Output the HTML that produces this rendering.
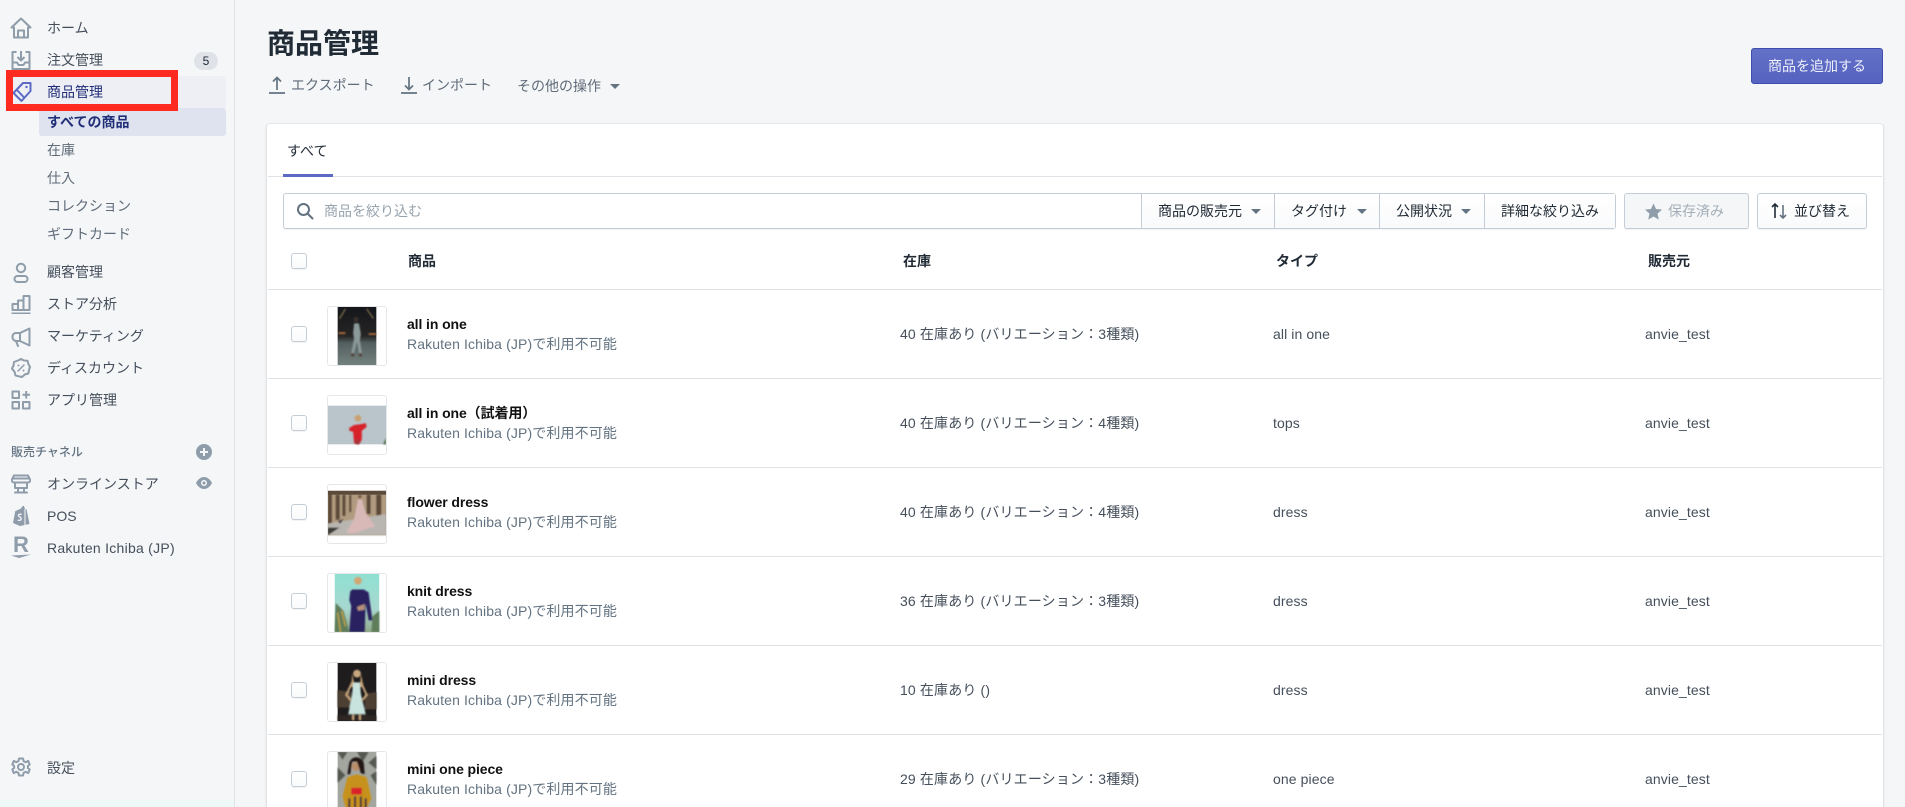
<!DOCTYPE html>
<html lang="ja">
<head>
<meta charset="utf-8">
<title>商品管理</title>
<style>
*{box-sizing:border-box}
html,body{margin:0;padding:0;width:1905px;height:807px;overflow:hidden;background:#f4f6f8}
body{position:relative;font-family:"Liberation Sans","Noto Sans CJK JP",sans-serif;font-size:14px;color:#454f5b}
.t{position:absolute;white-space:nowrap;line-height:20px;height:20px}
.a{position:absolute}
svg{position:absolute;display:block;overflow:hidden}
.ic{fill:none;stroke:#8f9caa;stroke-width:2;stroke-linejoin:round;stroke-linecap:round}
.cb{position:absolute;left:291px;width:16px;height:16px;border:1px solid #c4cdd5;border-radius:3px;background:linear-gradient(#fff,#f9fafb);box-shadow:0 1px 0 rgba(22,29,37,.05)}
.line{position:absolute;left:268px;width:1614px;height:1px;background:#dfe3e8}
.th{position:absolute;left:327px;width:60px;height:60px;border:1px solid #e4e7ea;border-radius:3px;background:#fff;overflow:hidden}
.ti{font-weight:bold;color:#111;left:407px;letter-spacing:-.1px}
.su{color:#637381;left:407px;letter-spacing:.12px}
.st,.ty,.se{color:#454f5b}
.st{left:900px;letter-spacing:.15px}.ty{left:1273px;letter-spacing:.1px}.se{left:1645px;letter-spacing:.1px}
.hd{font-weight:bold;color:#212b36;top:251px}
.nav{color:#454f5b;left:47px}
.sub{color:#5f6b78;left:47px}
.caret{position:absolute;width:0;height:0;border-left:5px solid transparent;border-right:5px solid transparent;border-top:5px solid #637381}
.div{position:absolute;top:193px;width:1px;height:36px;background:#c4cdd5}
</style>
</head>
<body>

<!-- sidebar -->
<div class="a" style="left:0;top:0;width:235px;height:807px;border-right:1px solid #dfe3e8;background:#f4f6f8"></div>
<div class="a" style="left:0;top:800px;width:234px;height:7px;background:#eef8f9"></div>
<div class="a" style="left:5px;top:76px;width:221px;height:33px;background:#edeff4;border-radius:3px"></div>
<div class="a" style="left:39px;top:108px;width:187px;height:28px;background:#dfe3f0;border-radius:3px"></div>

<!-- nav icons -->
<svg style="left:10px;top:17px" width="22" height="22" viewBox="0 0 22 22" class="ic"><path d="M11 1.500 1.500 10.500h2.500v10h14v-10h2.500zM8 20.500v-7h6v7"/></svg>
<svg style="left:11px;top:50px" width="20" height="20" viewBox="0 0 20 20" class="ic"><path d="M5.500 2H1.500v17h17V2h-4M10 1v9M6.500 7l3.500 3.500L13.500 7M1.500 12.500h4.500l1.500 2.500h5l1.500-2.500h4.500" stroke-linecap="butt"/></svg>
<svg style="left:12px;top:81px" width="20" height="22" viewBox="0 0 20 22" fill="none" stroke="#5c6ac4" stroke-width="2" stroke-linejoin="round"><path d="M11 2h7.500v8L9.500 20 1.500 12zM5 9l7.500 8"/><circle cx="14.500" cy="6" r="1.200" fill="#5c6ac4" stroke="none"/></svg>
<svg style="left:11px;top:262px" width="20" height="21" viewBox="0 0 20 21" class="ic"><circle cx="10" cy="6" r="4.200"/><rect x="3.500" y="14" width="13" height="6" rx="3"/></svg>
<svg style="left:11px;top:294px" width="20" height="20" viewBox="0 0 20 20" class="ic"><path d="M1.500 10h5.500v6H1.500zM7 6.500h5.500V16H7zM12.500 2h6v14h-6zM.5 19.500h19" stroke-linecap="butt"/></svg>
<svg style="left:11px;top:327px" width="20" height="20" viewBox="0 0 20 20" class="ic"><path d="M18.500 1.500v17L9 14H5.500a4 4 0 0 1-4-4.500 3.500 3.500 0 0 1 4-3.500H9zM9 6v8M5 14l2 5"/></svg>
<svg style="left:11px;top:358px" width="20" height="20" viewBox="0 0 20 20" class="ic"><path d="M7 2.500 10 1l3 1.500 3.500.3.900 3.200L19 9l-1 3-.7 3.500-3.300.9L11 19l-3-.6-3.500-1-.9-3.400L1 10.500l1.500-3 .5-3.500z"/><path d="M7 13 13 7" stroke-width="1.500"/><circle cx="7.500" cy="7.500" r="1" fill="#8f9caa" stroke="none"/><circle cx="12.500" cy="12.500" r="1" fill="#8f9caa" stroke="none"/></svg>
<svg style="left:11px;top:390px" width="20" height="20" viewBox="0 0 20 20" class="ic"><path d="M1.500 1.500h6.500v6.500H1.500zM1.500 12h6.500v6.500H1.500zM12 12h6.500v6.500H12zM15.200 1v7.500M11.500 4.800h7.500" stroke-linecap="butt"/></svg>
<svg style="left:11px;top:474px" width="20" height="20" viewBox="0 0 20 20" class="ic"><path d="M3 1.500h14l2 4a2.200 2.200 0 0 1-2 3H3a2.200 2.200 0 0 1-2-3zM1.500 4.500h17M4 8.500v5.500h12V8.500M4 18.500h12M7 14v4.500M13 14v4.500"/></svg>
<svg style="left:12px;top:505px" width="18" height="21" viewBox="0 0 18 21"><path d="M1 18 3.200 6.200 9 3.500C10 1 11.500.5 12 1l1 3 1.500.2L17.500 19 8 21z" fill="#8f9caa"/><path d="M13 4v16" stroke="#f4f6f8" stroke-width="1"/><path d="M9.500 9.500c-1.500-.8-3.300 0-3 1.300.3 1.200 2.700 1.300 2.700 3 0 1.500-2 2-3.400 1.100" fill="none" stroke="#f4f6f8" stroke-width="1.300"/></svg>
<div class="t" style="left:13px;top:533px;font-size:22px;line-height:24px;height:24px;font-weight:bold;color:#8f9caa">R</div>
<svg style="left:11px;top:554px" width="22" height="5" viewBox="0 0 22 5"><path d="M0 1.500 20 .5 8 4z" fill="#8f9caa"/></svg>
<svg style="left:11px;top:757px" width="20" height="20" viewBox="0 0 20 20" class="ic"><circle cx="10" cy="10" r="3"/><path d="M8 1.500h4l.6 2.700 2.200 1 2.400-1.300 1.500 3.600-1.800 1.500v2l1.800 1.500-1.500 3.600-2.400-1.300-2.200 1-.6 2.700H8l-.6-2.700-2.200-1-2.400 1.300-1.500-3.600L3.100 11V9L1.300 7.500l1.500-3.600 2.400 1.300 2.200-1z"/></svg>
<svg style="left:196px;top:444px" width="16" height="16" viewBox="0 0 16 16"><circle cx="8" cy="8" r="8" fill="#8f9caa"/><path d="M8 4v8M4 8h8" stroke="#f4f6f8" stroke-width="2"/></svg>
<svg style="left:196px;top:477px" width="16" height="12" viewBox="0 0 16 12"><path d="M0 6c2-4 5-6 8-6s6 2 8 6c-2 4-5 6-8 6s-6-2-8-6z" fill="#8f9caa"/><circle cx="8" cy="6" r="3" fill="#f4f6f8"/><circle cx="8" cy="6" r="1.500" fill="#8f9caa"/></svg>

<!-- nav text -->
<div class="t nav" style="top:18px">ホーム</div>
<div class="t nav" style="top:50px">注文管理</div>
<div class="a" style="left:194px;top:52px;width:24px;height:18px;background:#dfe3e8;border-radius:9px;color:#212b36;font-size:12px;line-height:18px;text-align:center">5</div>
<div class="t nav" style="top:82px;color:#202e78">商品管理</div>
<div class="t sub" style="top:112px;font-weight:bold;color:#202e78">すべての商品</div>
<div class="t sub" style="top:140px">在庫</div>
<div class="t sub" style="top:168px">仕入</div>
<div class="t sub" style="top:196px">コレクション</div>
<div class="t sub" style="top:224px">ギフトカード</div>
<div class="t nav" style="top:262px">顧客管理</div>
<div class="t nav" style="top:294px">ストア分析</div>
<div class="t nav" style="top:326px">マーケティング</div>
<div class="t nav" style="top:358px">ディスカウント</div>
<div class="t nav" style="top:390px">アプリ管理</div>
<div class="t" style="left:11px;top:442px;font-size:12px;color:#637381;font-weight:500">販売チャネル</div>
<div class="t nav" style="top:474px">オンラインストア</div>
<div class="t nav" style="top:506px">POS</div>
<div class="t nav" style="top:538px;letter-spacing:.26px">Rakuten Ichiba (JP)</div>
<div class="t sub" style="top:758px;color:#454f5b">設定</div>

<!-- red highlight -->
<div class="a" style="left:6px;top:70px;width:172px;height:41px;border:7px solid #ff2a20"></div>

<!-- page header -->
<div class="t" style="left:267px;top:24px;font-size:28px;line-height:40px;height:40px;font-weight:bold;color:#212b36">商品管理</div>
<svg style="left:269px;top:76px" width="16" height="18" viewBox="0 0 16 18" fill="none" stroke="#637381" stroke-width="1.700"><path d="M8 14V2M4 5.500 8 1.500l4 4M0 17h16"/></svg>
<div class="t" style="left:291px;top:75px;color:#5f6b78">エクスポート</div>
<svg style="left:401px;top:76px" width="16" height="18" viewBox="0 0 16 18" fill="none" stroke="#637381" stroke-width="1.700"><path d="M8 1v12M4 9.500l4 4 4-4M0 17h16"/></svg>
<div class="t" style="left:422px;top:75px;color:#5f6b78">インポート</div>
<div class="t" style="left:517px;top:76px;color:#5f6b78">その他の操作</div>
<div class="caret" style="left:610px;top:84px"></div>
<div class="a" style="left:1751px;top:48px;width:132px;height:36px;border:1px solid #3f4eae;border-radius:3px;background:linear-gradient(#6371c7,#5563c1);color:#eef0fa;line-height:34px;text-align:center">商品を追加する</div>

<!-- card -->
<div class="a" style="left:267px;top:124px;width:1616px;height:700px;background:#fff;border-radius:3px;box-shadow:0 0 0 1px rgba(63,63,68,.05),0 1px 3px rgba(63,63,68,.15)"></div>
<div class="t" style="left:287px;top:141px;color:#212b36">すべて</div>
<div class="line" style="top:176px"></div>
<div class="a" style="left:283px;top:174px;width:50px;height:3px;background:#5c6ac4"></div>

<!-- filter bar -->
<div class="a" style="left:283px;top:193px;width:1333px;height:36px;border:1px solid #c4cdd5;border-radius:3px;background:#fff;box-shadow:0 1px 0 rgba(22,29,37,.05)"></div>
<div class="a" style="left:1142px;top:194px;width:473px;height:34px;background:linear-gradient(#fff,#f9fafb)"></div>
<svg style="left:296px;top:202px" width="18" height="18" viewBox="0 0 18 18" fill="none" stroke="#637381" stroke-width="2"><circle cx="7.500" cy="7.500" r="5.500"/><path d="m11.500 11.500 5 5" stroke-linecap="round"/></svg>
<div class="t" style="left:324px;top:201px;color:#97a3ae">商品を絞り込む</div>
<div class="div" style="left:1141px"></div>
<div class="div" style="left:1274px"></div>
<div class="div" style="left:1379px"></div>
<div class="div" style="left:1484px"></div>
<div class="t" style="left:1158px;top:201px;color:#212b36">商品の販売元</div>
<div class="caret" style="left:1251px;top:209px"></div>
<div class="t" style="left:1291px;top:201px;color:#212b36">タグ付け</div>
<div class="caret" style="left:1357px;top:209px"></div>
<div class="t" style="left:1396px;top:201px;color:#212b36">公開状況</div>
<div class="caret" style="left:1461px;top:209px"></div>
<div class="t" style="left:1501px;top:201px;color:#212b36">詳細な絞り込み</div>

<div class="a" style="left:1624px;top:193px;width:125px;height:36px;border:1px solid #c4cdd5;border-radius:3px;background:#f4f6f8;box-shadow:0 1px 0 rgba(22,29,37,.05)"></div>
<svg style="left:1645px;top:203px" width="17" height="17" viewBox="0 0 17 17"><path d="M8.500 .5 11 6l6 .6-4.500 4 1.300 6-5.300-3.100-5.300 3.100 1.300-6L0 6.600 6 6z" fill="#8f9caa"/></svg>
<div class="t" style="left:1668px;top:201px;color:#a4aeb8">保存済み</div>

<div class="a" style="left:1757px;top:193px;width:110px;height:36px;border:1px solid #c4cdd5;border-radius:3px;background:linear-gradient(#fff,#f9fafb);box-shadow:0 1px 0 rgba(22,29,37,.05)"></div>
<svg style="left:1771px;top:202px" width="16" height="18" viewBox="0 0 16 18" fill="none" stroke-width="1.600"><path d="M4 16V2M1 5l3-3 3 3" stroke="#212b36"/><path d="M12 3v13M9 13l3 3 3-3" stroke="#637381"/></svg>
<div class="t" style="left:1794px;top:201px;color:#212b36">並び替え</div>

<!-- table header -->
<div class="cb" style="top:253px"></div>
<div class="t hd" style="left:408px">商品</div>
<div class="t hd" style="left:903px">在庫</div>
<div class="t hd" style="left:1276px">タイプ</div>
<div class="t hd" style="left:1648px">販売元</div>
<div class="line" style="top:289px"></div>

<!-- row 1 -->
<div class="cb" style="top:326px"></div>
<div class="th" style="top:306px"><svg width="58" height="58" viewBox="0 0 60 60" style="left:0;top:0"><defs><linearGradient id="g1" x1="0" y1="0" x2="0" y2="1"><stop offset="0" stop-color="#14161a"/><stop offset=".5" stop-color="#262524"/><stop offset=".62" stop-color="#535f5f"/><stop offset="1" stop-color="#74827f"/></linearGradient><filter id="b"><feGaussianBlur stdDeviation=".7"/></filter></defs><rect x="10" width="40" height="60" fill="url(#g1)"/><g filter="url(#b)"><path d="M12 12 18 2M47 12 40 2" stroke="#8a7650" stroke-width="1.200"/><path d="M11 27h7M42 28h8" stroke="#a5683c" stroke-width="2"/><circle cx="29" cy="13" r="2.500" fill="#3a2f2c"/><path d="M27 17h5l2 11-1 6 2 14h-3l-2-12-3 12h-3l3-15-1-6z" fill="#8a9a98"/><path d="M24 48h3v3h-3zM32 48h3v3h-3z" fill="#553b33"/></g></svg></div>
<div class="t ti" style="top:314px">all in one</div>
<div class="t su" style="top:334px">Rakuten Ichiba (JP)で利用不可能</div>
<div class="t st" style="top:324px">40 在庫あり (バリエーション：3種類)</div>
<div class="t ty" style="top:324px">all in one</div>
<div class="t se" style="top:324px">anvie_test</div>
<div class="line" style="top:378px"></div>

<!-- row 2 -->
<div class="cb" style="top:415px"></div>
<div class="th" style="top:395px"><svg width="58" height="58" viewBox="0 0 60 60" style="left:0;top:0"><rect y="10" width="60" height="40" fill="#b9c5ca"/><g filter="url(#b)"><circle cx="31" cy="23" r="3.500" fill="#c9a273"/><path d="M22 33l5-3 8-1 4-1 1 4-5 4v9l-2 4h-6l-1-12-4-1z" fill="#d7202a"/><path d="M28 45h5l-.5 5h-4z" fill="#a9323a"/><path d="M57 50l3-7v7z" fill="#5a7050"/></g></svg></div>
<div class="t ti" style="top:403px">all in one（試着用）</div>
<div class="t su" style="top:423px">Rakuten Ichiba (JP)で利用不可能</div>
<div class="t st" style="top:413px">40 在庫あり (バリエーション：4種類)</div>
<div class="t ty" style="top:413px">tops</div>
<div class="t se" style="top:413px">anvie_test</div>
<div class="line" style="top:467px"></div>

<!-- row 3 -->
<div class="cb" style="top:504px"></div>
<div class="th" style="top:484px"><svg width="58" height="58" viewBox="0 0 60 60" style="left:0;top:0"><rect y="6" width="60" height="46" fill="#b19b80"/><rect y="6" width="60" height="4" fill="#5a4a3c"/><g filter="url(#b)"><path d="M0 8h4v34H0zM8 10h4v26H8zM15 10h3v22h-3zM22 10h2v18h-2zM40 10h4v20h-4zM50 10h5v22h-5z" fill="#5b4a39"/><path d="M0 40 60 30v22H0z" fill="#b9b6b1"/><path d="M0 44h12L0 52zM10 38l6-3-3 5z" fill="#3a3a38"/><circle cx="33" cy="12" r="1.800" fill="#7c5a44"/><path d="M31 15h4l4 14 10 14-8 2-14 5-8-1 8-14z" fill="#d9b8b8"/></g></svg></div>
<div class="t ti" style="top:492px">flower dress</div>
<div class="t su" style="top:512px">Rakuten Ichiba (JP)で利用不可能</div>
<div class="t st" style="top:502px">40 在庫あり (バリエーション：4種類)</div>
<div class="t ty" style="top:502px">dress</div>
<div class="t se" style="top:502px">anvie_test</div>
<div class="line" style="top:556px"></div>

<!-- row 4 -->
<div class="cb" style="top:593px"></div>
<div class="th" style="top:573px"><svg width="58" height="58" viewBox="0 0 60 60" style="left:0;top:0"><defs><linearGradient id="g4" x1="0" y1="0" x2="0" y2="1"><stop offset="0" stop-color="#8fe0d2"/><stop offset=".6" stop-color="#a8d8d0"/><stop offset="1" stop-color="#8fa88a"/></linearGradient></defs><rect x="7" width="46" height="60" fill="url(#g4)"/><g filter="url(#b)"><path d="M8 30l8 8 6 22H7zM46 44l7-6v22h-8z" fill="#5e7d5a"/><path d="M10 40l3 20M14 38l4 16" stroke="#c1a24a" stroke-width="1.500"/><circle cx="31" cy="7" r="4" fill="#d2a574"/><path d="M25 16h12l5 3 4 29h-4l-3-17-1 29H22l2-27-2-6 1-9z" fill="#2a2260"/><path d="M30 34l8-3v6l-7 1z" fill="#b48f7a"/></g></svg></div>
<div class="t ti" style="top:581px">knit dress</div>
<div class="t su" style="top:601px">Rakuten Ichiba (JP)で利用不可能</div>
<div class="t st" style="top:591px">36 在庫あり (バリエーション：3種類)</div>
<div class="t ty" style="top:591px">dress</div>
<div class="t se" style="top:591px">anvie_test</div>
<div class="line" style="top:645px"></div>

<!-- row 5 -->
<div class="cb" style="top:682px"></div>
<div class="th" style="top:662px"><svg width="58" height="58" viewBox="0 0 60 60" style="left:0;top:0"><rect x="10" width="40" height="60" fill="#1f1c1d"/><g filter="url(#b)"><path d="M10 28l14 2 0 16-14 0zM38 32l12-2v18H38z" fill="#4d3f30"/><path d="M10 54h40v6H10z" fill="#2e2522"/><circle cx="30" cy="11" r="4" fill="#c9a67e"/><path d="M25 11l-1 14h4zM34 11l3 14h-4z" fill="#bc9a6c"/><path d="M26 20h7l1 12 5 21H21l4-21z" fill="#c8e3dd"/><path d="M25 20l-6 13 5 6M34 20l6 13-5 6" stroke="#c9a67e" stroke-width="2" fill="none"/><path d="M26 53v6M33 53v6" stroke="#c9a67e" stroke-width="2"/></g></svg></div>
<div class="t ti" style="top:670px">mini dress</div>
<div class="t su" style="top:690px">Rakuten Ichiba (JP)で利用不可能</div>
<div class="t st" style="top:680px">10 在庫あり ()</div>
<div class="t ty" style="top:680px">dress</div>
<div class="t se" style="top:680px">anvie_test</div>
<div class="line" style="top:734px"></div>

<!-- row 6 -->
<div class="cb" style="top:771px"></div>
<div class="th" style="top:751px"><svg width="58" height="58" viewBox="0 0 60 60" style="left:0;top:0"><rect x="10" width="40" height="60" fill="#a3a69f"/><g filter="url(#b)"><path d="M10 0h10l-5 8zM30 0h12l-6 10zM50 4v14l-8-7zM10 16l8 8-8 8zM44 24l6-4v14z" fill="#55594f"/><circle cx="29" cy="15" r="4.500" fill="#b98d6b"/><path d="M22 11c3-8 12-7 15 0l1 12-4-1-4-12-5 0-2 13h-3z" fill="#221815"/><path d="M20 26l10-3 10 3 5 22-6 12H19l-4-14z" fill="#c7921e"/><path d="M22 48v12M28 46v14M34 46v14M39 48v10" stroke="#2d2a3a" stroke-width="2"/><rect x="24" y="37" width="11" height="7" fill="#d9202b"/></g></svg></div>
<div class="t ti" style="top:759px">mini one piece</div>
<div class="t su" style="top:779px">Rakuten Ichiba (JP)で利用不可能</div>
<div class="t st" style="top:769px">29 在庫あり (バリエーション：3種類)</div>
<div class="t ty" style="top:769px">one piece</div>
<div class="t se" style="top:769px">anvie_test</div>

</body>
</html>
